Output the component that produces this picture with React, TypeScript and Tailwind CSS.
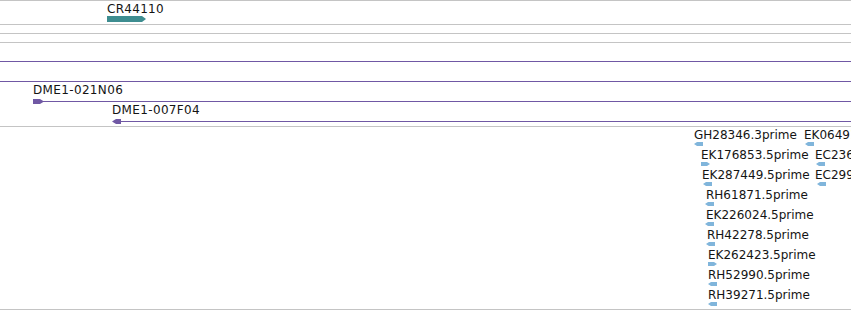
import React from "react";

const FONT = { fontFamily: '"DejaVu Sans", "Liberation Sans", sans-serif' };

type Est = { label: string; x: number; ax: number; dir: "l" | "r" };

const estRows: Est[][] = [
  [
    { label: "GH28346.3prime", x: 694, ax: 694, dir: "l" },
    { label: "EK064915.5prime", x: 804, ax: 805, dir: "l" },
  ],
  [
    { label: "EK176853.5prime", x: 701, ax: 701, dir: "r" },
    { label: "EC236188.5prime", x: 815, ax: 816, dir: "l" },
  ],
  [
    { label: "EK287449.5prime", x: 702, ax: 703, dir: "l" },
    { label: "EC299120.5prime", x: 815, ax: 817, dir: "l" },
  ],
  [{ label: "RH61871.5prime", x: 706, ax: 705, dir: "l" }],
  [{ label: "EK226024.5prime", x: 706, ax: 705, dir: "l" }],
  [{ label: "RH42278.5prime", x: 707, ax: 706, dir: "l" }],
  [{ label: "EK262423.5prime", x: 708, ax: 708, dir: "r" }],
  [{ label: "RH52990.5prime", x: 708, ax: 708, dir: "l" }],
  [{ label: "RH39271.5prime", x: 708, ax: 708, dir: "l" }],
];

function EstArrow({ dir }: { dir: "l" | "r" }) {
  return (
    <svg width="9" height="4" viewBox="0 0 9 4" className="block">
      <polygon
        points={dir === "l" ? "0,2 3,0 9,0 9,4 3,4" : "0,0 6,0 9,2 6,4 0,4"}
        fill="#80b5db"
      />
    </svg>
  );
}

function EstFeature({ e }: { e: Est }) {
  return (
    <>
      <span className="absolute top-[1px] whitespace-nowrap" style={{ left: e.x }}>
        {e.label}
      </span>
      <div className="absolute top-[15px]" style={{ left: e.ax }}>
        <EstArrow dir={e.dir} />
      </div>
    </>
  );
}

export default function App() {
  return (
    <div
      className="w-[851px] h-[310px] bg-white overflow-hidden text-[12px] leading-[14px] text-[#141414] flex flex-col"
      style={FONT}
    >
      {/* Track: CR44110 */}
      <div className="relative h-[24px] shrink-0 border-t border-[#c4c4c4]">
        <span className="absolute left-[107px] top-[1px] whitespace-nowrap tracking-[0.3px]">CR44110</span>
        <svg width="40" height="6" viewBox="0 0 40 6" className="absolute left-[107px] top-[15px]">
          <polygon points="0,0 35,0 39,3 35,6 0,6" fill="#3e8d90" />
        </svg>
      </div>
      <div className="h-[9px] shrink-0 border-t border-[#c4c4c4]" />
      <div className="h-[9px] shrink-0 border-t border-[#c4c4c4]" />

      {/* Track: DME1 clones */}
      <div className="h-[84px] shrink-0 border-t border-[#c4c4c4] flex flex-col">
        <div className="h-[20px] flex flex-col justify-end pb-[1px]">
          <div className="h-px bg-[#7058a4]" />
        </div>
        <div className="h-[20px] flex flex-col justify-end pb-[1px]">
          <div className="h-px bg-[#7058a4]" />
        </div>
        <div className="relative h-[20px]">
          <span className="absolute left-[33px] top-0 whitespace-nowrap tracking-[0.35px]">DME1-021N06</span>
          <div className="absolute left-[40px] right-0 top-[18px] h-px bg-[#7058a4]" />
          <svg width="11" height="5" viewBox="0 0 11 5" className="absolute left-[33px] top-[16px]">
            <polygon points="0,0 7,0 11,2.5 7,5 0,5" fill="#7058a4" />
          </svg>
        </div>
        <div className="relative h-[20px]">
          <span className="absolute left-[112px] top-0 whitespace-nowrap tracking-[0.35px]">DME1-007F04</span>
          <div className="absolute left-[116px] right-0 top-[18px] h-px bg-[#7058a4]" />
          <svg width="9" height="5" viewBox="0 0 9 5" className="absolute left-[112px] top-[16px]">
            <polygon points="0,2.5 4,0 9,0 9,5 4,5" fill="#7058a4" />
          </svg>
        </div>
      </div>

      {/* Track: ESTs */}
      <div className="h-[183px] shrink-0 border-t border-[#c4c4c4] flex flex-col">
        {estRows.map((row, i) => (
          <div key={i} className="relative h-[20px] shrink-0">
            {row.map((e) => (
              <EstFeature key={e.label} e={e} />
            ))}
          </div>
        ))}
      </div>
      <div className="h-px shrink-0 bg-[#c4c4c4]" />
    </div>
  );
}
